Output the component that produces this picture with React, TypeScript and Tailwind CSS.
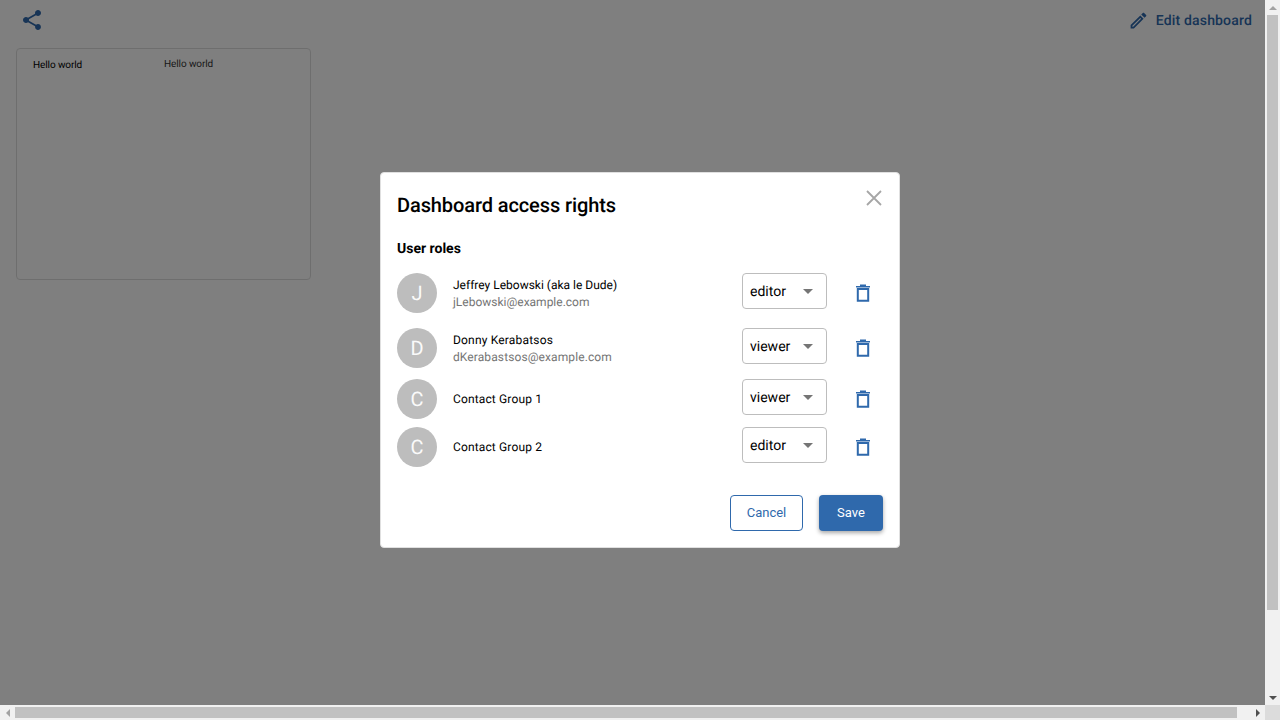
import React from "react";

const font = { fontFamily: "Roboto, sans-serif" };

function Trash() {
  return (
    <svg width="16" height="18" viewBox="0 0 16 18" className="text-[#2f69ac]">
      <path d="M1 2h14v1.5H1zM5 .5h6V2H5z" fill="currentColor" />
      <path d="M2.8 5h10.4v11.8H2.8z" fill="none" stroke="currentColor" strokeWidth="2" />
    </svg>
  );
}

function Row({ letter, name, email, role, className, nameClass = "" }: { letter: string; name: string; email?: string; role: string; className: string; nameClass?: string }) {
  return (
    <div className={`flex items-center ${className}`}>
      <div className="flex h-10 w-10 shrink-0 items-center justify-center rounded-full bg-[#bdbdbd] text-xl text-[#fafafa]">{letter}</div>
      <div className={`ml-4 w-[289px] shrink-0 ${email ? "pt-0.5" : ""}`}>
        <div className={`text-xs leading-[17px] text-black ${nameClass}`}>{name}</div>
        {email && <div className={`text-xs leading-[17px] text-[#757575] ${nameClass ? "tracking-[0.1px]" : ""}`}>{email}</div>}
      </div>
      <div className="-mt-1 flex h-9 w-[85px] shrink-0 items-center justify-between rounded border border-[#bdbdbd] pl-[7px] pr-[13px] text-sm text-black">
        <span className="mt-0.5">{role}</span>
        <span className="h-0 w-0 border-x-[5px] border-t-[5px] border-x-transparent border-t-[#757575]" />
      </div>
      <div className="ml-[28px] flex">
        <Trash />
      </div>
    </div>
  );
}

export default function App() {
  return (
    <div style={font} className="flex h-screen w-screen flex-col overflow-hidden bg-white [text-rendering:geometricPrecision] antialiased">
      <div className="flex min-h-0 flex-1">
        <main className="min-w-0 flex-1">
          <header className="flex h-10 items-center justify-between pl-5 pr-[13px] text-[#2f69ac]">
            <svg width="24" height="24" viewBox="0 0 24 24" fill="currentColor">
              <path d="M18 16.08c-.76 0-1.44.3-1.96.77L8.91 12.7c.05-.23.09-.46.09-.7s-.04-.47-.09-.7l7.05-4.11c.54.5 1.25.81 2.04.81 1.66 0 3-1.34 3-3s-1.34-3-3-3-3 1.34-3 3c0 .24.04.47.09.7L8.04 9.81C7.5 9.31 6.79 9 6 9c-1.66 0-3 1.34-3 3s1.34 3 3 3c.79 0 1.5-.31 2.04-.81l7.12 4.16c-.05.21-.08.43-.08.65 0 1.61 1.31 2.92 2.92 2.92 1.61 0 2.92-1.31 2.92-2.92s-1.31-2.92-2.92-2.92z" />
            </svg>
            <div className="flex items-center gap-[7px] text-sm font-medium tracking-[0.17px]">
              <svg width="21" height="21" viewBox="0 0 24 24" fill="currentColor" className="-ml-px">
                <path d="M3 17.25V21h3.75L17.81 9.94l-3.75-3.75L3 17.25zM5.92 19H5v-.92l9.06-9.06.92.92L5.92 19zM20.71 5.63l-2.34-2.34c-.2-.2-.45-.29-.71-.29s-.51.1-.7.29l-1.83 1.83 3.75 3.75 1.83-1.83c.39-.39.39-1.02 0-1.41z" />
              </svg>
              <span className="mt-0.5">Edit dashboard</span>
            </div>
          </header>
          <div className="ml-4 mt-2 flex h-[232px] w-[295px] items-start rounded border border-[#dddddd] pl-4 text-[10px] tracking-[-0.1px] text-black">
            <span className="mt-[9px] w-[131px]">Hello world</span>
            <span className="mt-2 text-[#333333]">Hello world</span>
          </div>

          <div className="fixed left-0 top-0 flex h-screen w-screen items-center justify-center bg-black/50">
            <div className="relative h-[376px] w-[520px] rounded border border-[#e0e0e0] bg-white px-4">
              <svg width="24" height="24" viewBox="0 0 24 24" className="absolute right-[13px] top-[13px] text-[#a6a6a6]" fill="none" stroke="currentColor" strokeWidth="1.8">
                <path d="M5 5l14 14M19 5L5 19" />
              </svg>
              <h2 className="pt-[19px] text-xl font-medium leading-[26px] tracking-[-0.1px] text-black">Dashboard access rights</h2>
              <h3 className="mt-[21px] text-sm font-bold leading-[20px] text-black">User roles</h3>
              <div className="mt-[14px] flex flex-col">
                <Row letter="J" name="Jeffrey Lebowski (aka le Dude)" email="jLebowski@example.com" role="editor" className="" />
                <Row letter="D" name="Donny Kerabatsos" email="dKerabastsos@example.com" role="viewer" className="mt-[15px]" nameClass="tracking-[0.18px]" />
                <Row letter="C" name="Contact Group 1" role="viewer" className="mt-[11px]" nameClass="tracking-[0.14px]" />
                <Row letter="C" name="Contact Group 2" role="editor" className="mt-2" nameClass="tracking-[0.14px]" />
              </div>
              <div className="mt-[28px] flex justify-end gap-4">
                <button className="h-9 w-[73px] rounded border border-[#2f69ac] bg-white text-[13px] text-[#2f69ac]">Cancel</button>
                <button className="h-9 w-16 rounded bg-[#2f69ac] text-[13px] text-white shadow-[0_2px_4px_rgba(0,0,0,0.35)]">Save</button>
              </div>
            </div>
          </div>
        </main>
        <div className="relative z-10 flex w-[15px] shrink-0 flex-col items-center bg-[#f1f1f1]">
          <div className="flex h-[15px] w-full items-center justify-center">
            <span className="h-0 w-0 border-x-[4px] border-b-[4px] border-x-transparent border-b-[#a3a3a3]" />
          </div>
          <div className="h-[595px] w-[11px] bg-[#c1c1c1]" />
          <div className="mt-auto flex h-[15px] w-full items-center justify-center">
            <span className="h-0 w-0 border-x-[4px] border-t-[4px] border-x-transparent border-t-[#505050]" />
          </div>
        </div>
      </div>
      <div className="relative z-10 flex h-[15px] shrink-0 items-center bg-[#f1f1f1]">
        <div className="flex h-[15px] w-[15px] items-center justify-center">
          <span className="h-0 w-0 border-y-[4px] border-r-[4px] border-y-transparent border-r-[#a3a3a3]" />
        </div>
        <div className="h-[11px] w-[1222px] bg-[#c1c1c1]" />
        <div className="ml-auto flex h-[15px] w-[15px] items-center justify-center">
          <span className="h-0 w-0 border-y-[4px] border-l-[4px] border-y-transparent border-l-[#505050]" />
        </div>
        <div className="h-[15px] w-[15px] bg-[#dcdcdc]" />
      </div>
    </div>
  );
}
